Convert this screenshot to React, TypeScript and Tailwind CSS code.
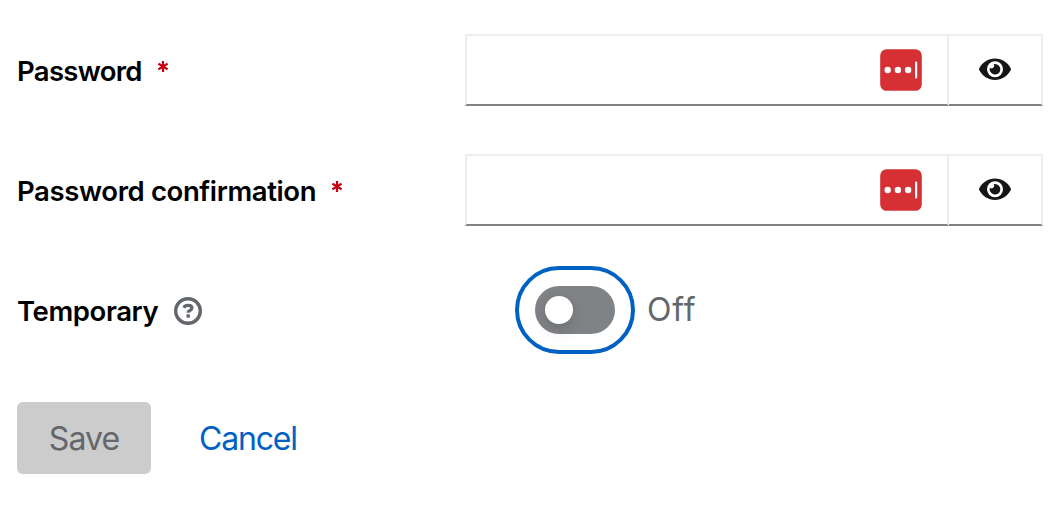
import React, { useState } from 'react';
import { FaEye } from 'react-icons/fa';

interface FieldProps { id: string; label: string; labelClass: string; }

function ManagerBadge() {
  return (
    <svg viewBox="0 0 42 42" className="h-[42px] w-[42px] shrink-0" aria-hidden="true">
      <rect x="0.2" y="0.2" width="41.6" height="41.6" rx="6.5" fill="#d63034" />
      <circle cx="7.7" cy="21" r="3.2" fill="#fff" />
      <circle cx="17.9" cy="21" r="3.2" fill="#fff" />
      <circle cx="28.1" cy="21" r="3.2" fill="#fff" />
      <rect x="35" y="12.6" width="2.2" height="17" rx="1" fill="#fff" />
    </svg>
  );
}

function HelpIcon() {
  return (
    <svg viewBox="0 0 28 28" className="mt-0.5 h-7 w-7" fill="none" stroke="#63666b" aria-hidden="true">
      <circle cx="14" cy="14" r="12.3" strokeWidth="3.4" />
      <path d="M9.8 10.8c.8-1.6 2.2-2.4 4.2-2.4 2.1 0 3.9 1 3.9 2.7 0 1.4-1.1 2-2 2.5-1 .5-1.7.9-1.7 2.2" strokeWidth="3.3" />
      <rect x="12.5" y="17.3" width="3.4" height="3.4" fill="#63666b" stroke="none" />
    </svg>
  );
}

function Asterisk() {
  return (
    <svg viewBox="0 0 10 11" className="-mt-[7px] h-[11px] w-[10px]" stroke="#c9000f" strokeWidth="2.2" aria-hidden="true">
      <path d="M5 0v11M.4 2.7l9.2 5.6M9.6 2.7L.4 8.3" />
    </svg>
  );
}

function PasswordField({ id, label, labelClass }: FieldProps) {
  const [show, setShow] = useState(false);
  return (
    <div className="flex h-[72px] items-center">
      <div className="flex w-[448px] items-center">
        <label htmlFor={id} className={`mt-px whitespace-nowrap text-[27.5px] leading-9 font-semibold ${labelClass}`}>{label}</label>
        <Asterisk />
      </div>
      <div className="flex h-full w-[484px] items-center border-2 border-[#ededed] border-b-[#808285] pr-[25px]">
        <input id={id} type={show ? 'text' : 'password'} className="h-full min-w-0 flex-1 px-4 text-[32px] outline-none" />
        <ManagerBadge />
      </div>
      <button type="button" onClick={() => setShow(!show)} aria-label="Show password" className="flex h-full w-[94px] items-center justify-center border-2 border-l-0 border-[#ededed] border-b-[#808285] text-[#151515]">
        <FaEye className="-mt-0.5 h-[28.5px] w-8" />
      </button>
    </div>
  );
}

export default function App() {
  const [on, setOn] = useState(false);
  return (
    <form onSubmit={e => e.preventDefault()} className="flex h-[506px] w-[1064px] flex-col bg-white pt-[34px] pl-[17px] font-['Inter',sans-serif] text-black">
      <div className="flex flex-col gap-12">
        <PasswordField id="password" label="Password" labelClass="w-[141px] tracking-[-0.7px]" />
        <PasswordField id="confirmation" label="Password confirmation" labelClass="w-[315px] tracking-[-0.38px]" />
      </div>
      <div className="mt-10 flex h-[88px] items-center">
        <div className="flex w-[498px] items-center">
          <span className="mt-px w-[157px] text-[27.5px] leading-9 font-semibold tracking-[-0.4px]">Temporary</span>
          <HelpIcon />
        </div>
        <button type="button" role="switch" aria-checked={on} aria-label="Temporary" onClick={() => setOn(!on)} className="flex h-[88px] w-[120px] items-center justify-center rounded-full border-4 border-[#0061c4]">
          <span className={`flex h-12 w-20 items-center rounded-full bg-[#808386] px-2.5 ${on ? 'justify-end' : ''}`}>
            <span className="h-7 w-7 rounded-full bg-white shadow-[0_8px_16px_rgba(3,3,3,0.12),0_0_6px_rgba(3,3,3,0.06)]" />
          </span>
        </button>
        <span className="ml-3 text-[32px] leading-12 font-normal tracking-[0.8px] text-[#63666b]">{on ? 'On' : 'Off'}</span>
      </div>
      <div className="mt-12 flex h-[72px] items-center">
        <button disabled className="flex h-full w-[134px] items-center justify-center rounded-[6px] bg-[#ccc] pt-0.5 text-[32px] tracking-[-0.9px] text-[#63676b]">Save</button>
        <button type="button" className="mt-0.5 ml-12 text-[32px] tracking-[-1.2px] text-[#0061c4]">Cancel</button>
      </div>
    </form>
  );
}
